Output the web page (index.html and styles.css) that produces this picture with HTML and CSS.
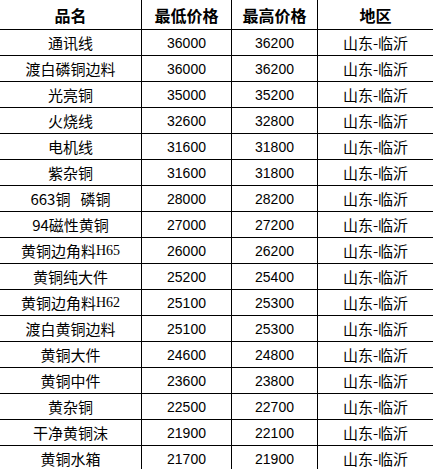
FILE: index.html
```html
<!DOCTYPE html>
<html lang="zh-CN">
<head>
<meta charset="utf-8">
<title>价格表</title>
<link rel="stylesheet" href="styles.css">
</head>
<body>
<div class="price-table">
  <div class="cell head">品名</div><div class="cell head">最低价格</div><div class="cell head">最高价格</div><div class="cell head">地区</div>
  <div class="cell">通讯线</div><div class="cell num">36000</div><div class="cell num">36200</div><div class="cell">山东-临沂</div>
  <div class="cell">渡白磷铜边料</div><div class="cell num">36000</div><div class="cell num">36200</div><div class="cell">山东-临沂</div>
  <div class="cell">光亮铜</div><div class="cell num">35000</div><div class="cell num">35200</div><div class="cell">山东-临沂</div>
  <div class="cell">火烧线</div><div class="cell num">32600</div><div class="cell num">32800</div><div class="cell">山东-临沂</div>
  <div class="cell">电机线</div><div class="cell num">31600</div><div class="cell num">31800</div><div class="cell">山东-临沂</div>
  <div class="cell">紫杂铜</div><div class="cell num">31600</div><div class="cell num">31800</div><div class="cell">山东-临沂</div>
  <div class="cell">663铜&nbsp;&nbsp;&nbsp;磷铜</div><div class="cell num">28000</div><div class="cell num">28200</div><div class="cell">山东-临沂</div>
  <div class="cell">94磁性黄铜</div><div class="cell num">27000</div><div class="cell num">27200</div><div class="cell">山东-临沂</div>
  <div class="cell">黄铜边角料<span class="latin">H65</span></div><div class="cell num">26000</div><div class="cell num">26200</div><div class="cell">山东-临沂</div>
  <div class="cell">黄铜纯大件</div><div class="cell num">25200</div><div class="cell num">25400</div><div class="cell">山东-临沂</div>
  <div class="cell">黄铜边角料<span class="latin">H62</span></div><div class="cell num">25100</div><div class="cell num">25300</div><div class="cell">山东-临沂</div>
  <div class="cell">渡白黄铜边料</div><div class="cell num">25100</div><div class="cell num">25300</div><div class="cell">山东-临沂</div>
  <div class="cell">黄铜大件</div><div class="cell num">24600</div><div class="cell num">24800</div><div class="cell">山东-临沂</div>
  <div class="cell">黄铜中件</div><div class="cell num">23600</div><div class="cell num">23800</div><div class="cell">山东-临沂</div>
  <div class="cell">黄杂铜</div><div class="cell num">22500</div><div class="cell num">22700</div><div class="cell">山东-临沂</div>
  <div class="cell">干净黄铜沫</div><div class="cell num">21900</div><div class="cell num">22100</div><div class="cell">山东-临沂</div>
  <div class="cell">黄铜水箱</div><div class="cell num">21700</div><div class="cell num">21900</div><div class="cell">山东-临沂</div>
</div>
</body>
</html>
```

FILE: styles.css
```css
html, body {
  margin: 0;
  padding: 0;
  overflow: hidden;
  background: #ffffff;
}

.price-table {
  display: grid;
  grid-template-columns: 141px 89px 85px 115px;
  grid-template-rows: 29px;
  grid-auto-rows: 25px;
  gap: 1px;
  background: #000000;
  width: 433px;
  font-family: "Noto Sans CJK SC", sans-serif;
  color: #000000;
}

.cell {
  background: #ffffff;
  display: flex;
  align-items: center;
  justify-content: center;
  font-size: 15px;
  line-height: 1;
  white-space: nowrap;
}

.head {
  font-size: 16px;
  font-weight: 700;
  padding-top: 1px;
}

.num {
  font-family: "Liberation Sans", sans-serif;
  font-size: 14px;
}

.latin {
  font-family: "Liberation Serif", serif;
  font-size: 14px;
}
```
